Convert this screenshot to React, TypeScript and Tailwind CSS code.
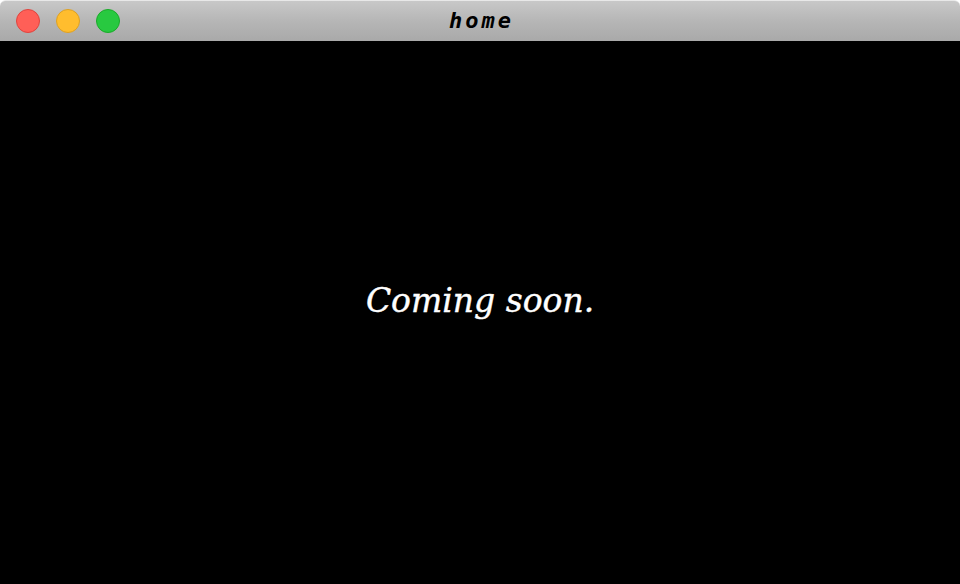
export default function App() {
  return (
    <div className="flex h-[584px] w-[960px] flex-col bg-white">
      {/* title bar */}
      <div className="relative flex h-[41px] shrink-0 items-center rounded-t-[6px] border-t border-[#e8e8e8] bg-gradient-to-b from-[#c8c8c8] via-[#b6b6b6] to-[#a9a9a9] px-[16px]">
        <div className="flex gap-[16px]">
          <span className="h-[24px] w-[24px] rounded-full border border-[#e0443e] bg-[#ff5f57]" />
          <span className="h-[24px] w-[24px] rounded-full border border-[#dea123] bg-[#ffbd2e]" />
          <span className="h-[24px] w-[24px] rounded-full border border-[#1aab29] bg-[#28c940]" />
        </div>
        <div className="absolute inset-0 flex items-center justify-center">
          <span className="pl-[3px] font-['DejaVu_Sans_Mono',monospace] text-[22px] font-bold italic leading-none tracking-[3px] text-black">
            home
          </span>
        </div>
      </div>

      {/* body */}
      <div className="flex flex-1 items-center justify-center bg-black pb-[24px]">
        <p className="font-['DejaVu_Serif',serif] text-[33px] italic text-white [-webkit-text-stroke:0.4px_white]">
          Coming soon.
        </p>
      </div>
    </div>
  );
}
